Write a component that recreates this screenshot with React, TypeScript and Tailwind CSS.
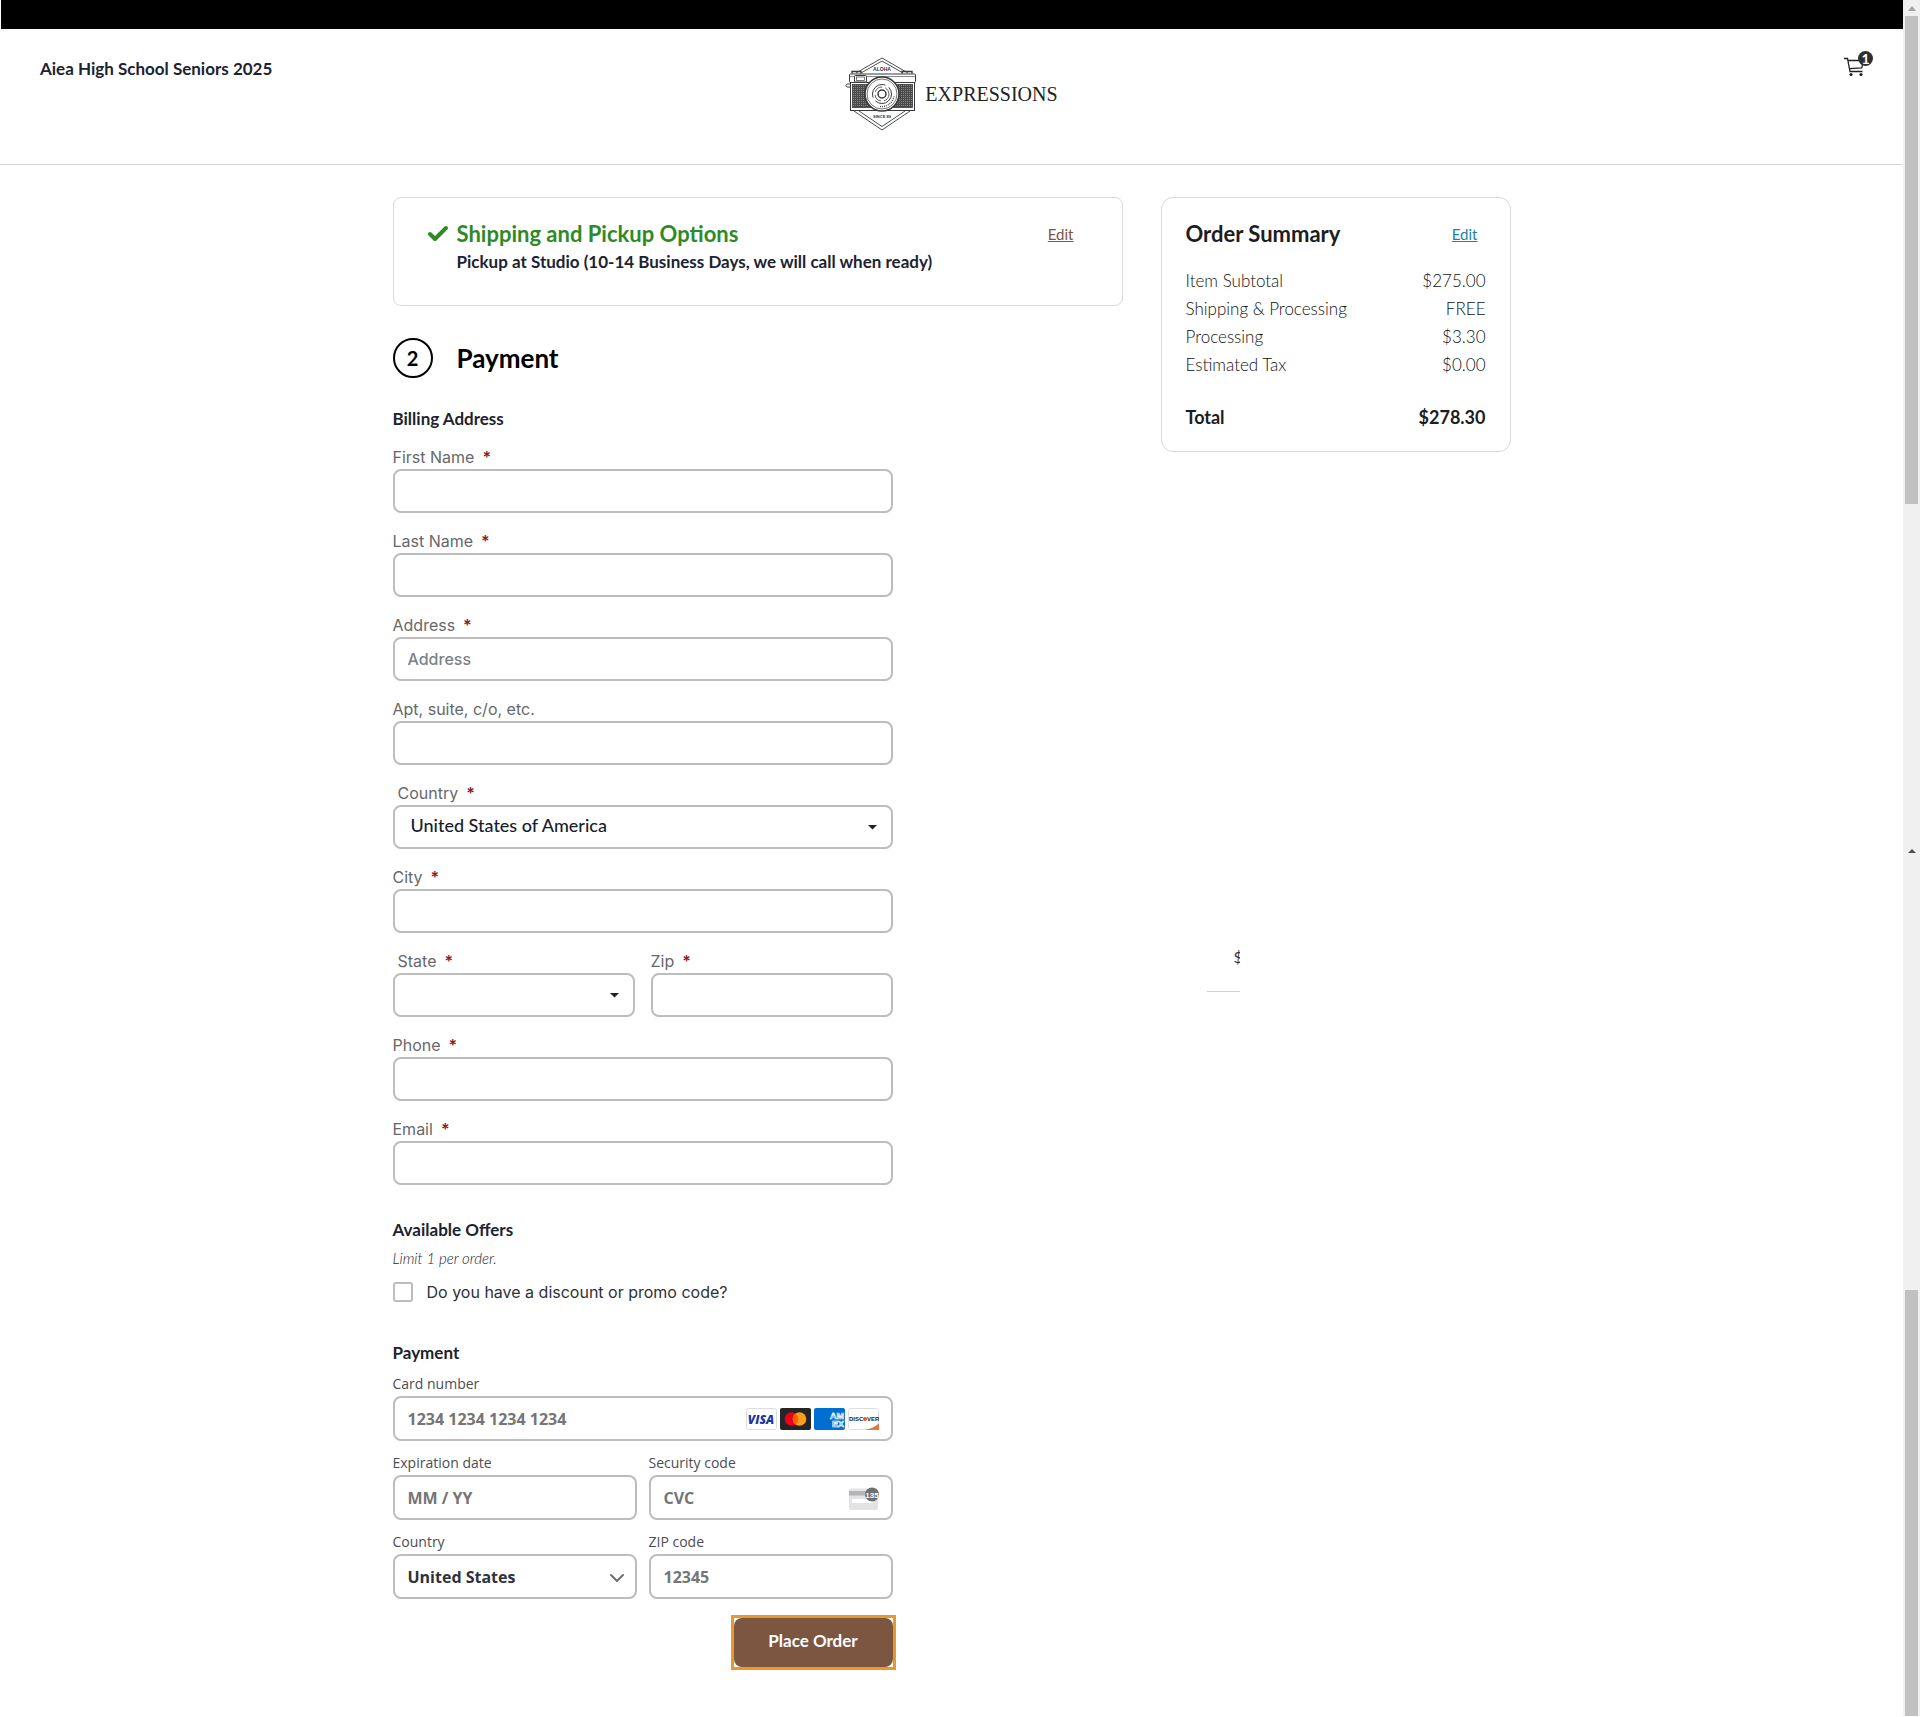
import { useState, type ReactNode } from "react"
import { Check, ChevronDown } from "lucide-react"

const summary = [
  { label: "Item Subtotal", value: "$275.00" },
  { label: "Shipping & Processing", value: "FREE" },
  { label: "Processing", value: "$3.30" },
  { label: "Estimated Tax", value: "$0.00" },
]

const inputClass =
  "block h-11 w-full rounded-lg border-2 border-[#bdbdbd] bg-white px-[13px] font-['Inter',sans-serif] text-base font-medium text-[#1c2330] placeholder:text-[#7d8185]"
const cardInputClass =
  "block h-[45px] w-full appearance-none rounded-lg border-2 border-[#bdbdbd] bg-white px-[13px] text-base font-bold text-[#30313d] placeholder:text-[#757575]"

function Field({
  id,
  label,
  required = true,
  indent = false,
  children,
}: {
  id: string
  label: string
  required?: boolean
  indent?: boolean
  children?: ReactNode
}) {
  return (
    <div className="mb-4 flex-1">
      <label
        htmlFor={id}
        className={`block font-['Inter',sans-serif] text-base text-[#66686b] ${indent ? "pl-[5px]" : ""}`}
      >
        {label}
        {required && <span className="ml-2 font-semibold text-[#8e1b2c]">*</span>}
      </label>
      {children ?? <input id={id} type="text" className={inputClass} />}
    </div>
  )
}

function CaretSelect({ id, options }: { id: string; options: string[] }) {
  return (
    <div className="relative">
      <select
        id={id}
        className="block h-11 w-full appearance-none rounded-lg border-2 border-[#bdbdbd] bg-white px-4 pb-1 text-lg font-medium text-[#16202c]"
      >
        {options.map((o) => (
          <option key={o}>{o}</option>
        ))}
      </select>
      <svg className="pointer-events-none absolute top-5 right-4" width="9" height="5" viewBox="0 0 9 5">
        <path d="M0 0h9L4.500 4.600z" fill="#222" />
      </svg>
    </div>
  )
}

function CardField({ id, label, children }: { id: string; label: string; children: ReactNode }) {
  return (
    <div className="flex-1">
      <label htmlFor={id} className="block text-sm leading-6 text-[#4c4d52]">
        {label}
      </label>
      <div className="relative">{children}</div>
    </div>
  )
}

function CameraLogo() {
  return (
    <svg width="72" height="74" viewBox="0 0 72 74" fill="none" stroke="#3a3a3a">
      <defs>
        <pattern id="grip" width="2" height="2" patternUnits="userSpaceOnUse">
          <rect width="2" height="2" fill="#4a4a4a" stroke="none" />
          <rect width="1" height="1" fill="#868686" stroke="none" />
        </pattern>
      </defs>
      {/* badge outline */}
      <path d="M11 16 37 1l26 15M16 16 37 4l21 12M9 54l28 19 28-19M14 54l23 15.500L60 54" strokeWidth=".9" />
      {/* body */}
      <rect x="4.500" y="17" width="66" height="8.500" rx="1" fill="#fff" />
      <rect x="5.500" y="25.500" width="64" height="28" fill="#fff" />
      <path d="M7 16.500v-2h9v2M57 16.500v-2h10v2" strokeWidth="1.400" />
      <path d="M5 19.500h65" strokeWidth=".6" />
      <rect x="9.500" y="18.500" width="12" height="6.500" rx="1" fill="#fff" />
      <rect x="11.500" y="20" width="8" height="3.500" strokeWidth=".7" />
      <path d="M5 27H2.500a1.500 1.500 0 0 0 0 3H5" />
      <rect x="7.500" y="27.500" width="60" height="23" fill="url(#grip)" strokeWidth=".8" />
      {/* lens */}
      <circle cx="37" cy="37" r="17" fill="#fff" strokeWidth="1.600" />
      <circle cx="37" cy="37" r="15" strokeWidth=".7" />
      <circle cx="37" cy="37" r="9.500" strokeWidth="1" strokeDasharray="22 4" />
      <circle cx="37" cy="37" r="7" strokeWidth=".8" strokeDasharray="9 3" />
      <circle cx="37" cy="37" r="4" strokeWidth="1.500" />
      <path d="M35 49.500a12.500 12.500 0 0 0 14-10" strokeWidth="1.200" strokeDasharray="1 1" />
      <g fill="#333" stroke="none" fontFamily="Liberation Sans, sans-serif" fontWeight="bold" textAnchor="middle">
        <text x="37" y="14" fontSize="5">ALOHA</text>
        <text x="37" y="61" fontSize="4">SINCE 89</text>
      </g>
    </svg>
  )
}

function CardBrands() {
  return (
    <div className="pointer-events-none absolute top-3 right-[14px] flex gap-[3px]">
      <svg width="31" height="22" viewBox="0 0 31 22">
        <rect x=".5" y=".5" width="30" height="21" rx="2" fill="#fff" stroke="#dedede" />
        <text x="15" y="15.500" fontSize="12" fontWeight="800" fontStyle="italic" textAnchor="middle" fill="#1a35a8" fontFamily="Open Sans, sans-serif">VISA</text>
      </svg>
      <svg width="31" height="22" viewBox="0 0 31 22">
        <rect width="31" height="22" rx="2" fill="#252525" />
        <circle cx="11.500" cy="11" r="6.800" fill="#eb001b" />
        <circle cx="19.500" cy="11" r="6.800" fill="#f79e1b" />
        <path d="M15.500 5.500a6.800 6.800 0 0 1 0 11 6.800 6.800 0 0 1 0-11" fill="#ff5f00" />
      </svg>
      <svg width="31" height="22" viewBox="0 0 31 22">
        <rect width="31" height="22" rx="2" fill="#016fd0" />
        <g fill="none" stroke="#fff" strokeWidth=".7" fontSize="9" fontWeight="bold" fontFamily="Liberation Sans, sans-serif">
          <text x="16" y="10.500">AM</text>
          <text x="18" y="18.500">EX</text>
        </g>
      </svg>
      <svg width="31" height="22" viewBox="0 0 31 22">
        <rect x=".5" y=".5" width="30" height="21" rx="2" fill="#fff" stroke="#dedede" />
        <path d="M31 15.500V22H17c6-1.300 10.500-3.500 14-6.500" fill="#e07a3c" />
        <g fontSize="6" fontWeight="bold" fill="#222" fontFamily="Liberation Sans, sans-serif">
          <text x="1" y="13">DISC</text>
          <text x="19" y="13">VER</text>
        </g>
        <circle cx="17" cy="11" r="2" fill="#e4572e" />
      </svg>
    </div>
  )
}

function CvcIcon() {
  return (
    <svg className="pointer-events-none absolute top-3 right-[14px]" width="31" height="24" viewBox="0 0 31 24">
      <rect x="1" y="1.500" width="29" height="21.500" rx="2" fill="#e3e3e3" />
      <path d="M1 4h29v4.500H1z" fill="#b4b5b9" />
      <path d="M4 12h21v4H4z" fill="#fff" />
      <circle cx="24" cy="7.500" r="7" fill="#6d6e72" />
      <text x="24" y="10.500" fontSize="8" fontWeight="bold" textAnchor="middle" fill="#fff" fontFamily="Liberation Sans, sans-serif">135</text>
    </svg>
  )
}

function Header() {
  return (
    <header className="grid h-[136px] grid-cols-3 items-start border-b border-[#d4d4d4] px-10 pt-7">
      <p className="text-[17px] leading-6 font-bold">Aiea High School Seniors 2025</p>
      <a href="#home" className="flex items-center gap-2 justify-self-center">
        <CameraLogo />
        <span className="font-['Liberation_Serif',serif] text-xl text-[#222]">EXPRESSIONS</span>
      </a>
      <a href="#cart" aria-label="Cart" className="relative mr-[-10px] justify-self-end pr-[9px]">
        <svg width="20" height="20" viewBox="0 0 20 20" fill="none" stroke="#222" strokeWidth="1.300">
          <path d="M0 1.500h3.500L6 14.500h12.500M4.200 3.500h15L17.800 11 5.400 11.600" />
          <circle cx="7" cy="17.500" r="1.600" fill="#222" stroke="none" />
          <circle cx="17" cy="17.500" r="1.600" fill="#222" stroke="none" />
        </svg>
        <span className="absolute -top-[6px] right-0 flex size-[15px] items-center justify-center rounded-full bg-[#2f2f2f] text-sm leading-none font-bold text-white">
          1
        </span>
      </a>
    </header>
  )
}

function BillingAddress() {
  return (
    <section className="mt-[29px]">
      <h3 className="mb-[14px] text-[17px] leading-6 font-bold">Billing Address</h3>
      <Field id="firstName" label="First Name" />
      <Field id="lastName" label="Last Name" />
      <Field id="address" label="Address">
        <input id="address" type="text" placeholder="Address" className={inputClass} />
      </Field>
      <Field id="apt" label="Apt, suite, c/o, etc." required={false} />
      <Field id="country" label="Country" indent>
        <CaretSelect id="country" options={["United States of America"]} />
      </Field>
      <Field id="city" label="City" />
      <div className="flex gap-4">
        <Field id="state" label="State" indent>
          <CaretSelect id="state" options={[""]} />
        </Field>
        <Field id="zip" label="Zip" />
      </div>
      <Field id="phone" label="Phone" />
      <Field id="email" label="Email" />
    </section>
  )
}

function Offers() {
  const [promo, setPromo] = useState(false)

  return (
    <section className="mt-[33px]">
      <h3 className="text-[17px] leading-6 font-bold">Available Offers</h3>
      <p className="mt-1 text-[15px] leading-6 font-light italic">Limit 1 per order.</p>
      <label className="mt-3 flex items-center gap-[14px] font-['Inter',sans-serif] text-base leading-5 text-[#2d3136]">
        <input
          type="checkbox"
          checked={promo}
          onChange={(e) => setPromo(e.target.checked)}
          className="size-5 appearance-none rounded-[3px] border-2 border-[#bdbdbd] bg-white checked:bg-[#7d5642]"
        />
        Do you have a discount or promo code?
      </label>
    </section>
  )
}

function CardPayment() {
  return (
    <section className="mt-[39px]">
      <h3 className="mb-[7px] text-[17px] leading-6 font-bold">Payment</h3>
      <div className="space-y-[10px] font-['Open_Sans',sans-serif]">
        <CardField id="cardNumber" label="Card number">
          <input id="cardNumber" type="text" placeholder="1234 1234 1234 1234" className={cardInputClass} />
          <CardBrands />
        </CardField>
        <div className="flex gap-3">
          <CardField id="exp" label="Expiration date">
            <input id="exp" type="text" placeholder="MM / YY" className={cardInputClass} />
          </CardField>
          <CardField id="cvc" label="Security code">
            <input id="cvc" type="text" placeholder="CVC" className={cardInputClass} />
            <CvcIcon />
          </CardField>
        </div>
        <div className="flex gap-3">
          <CardField id="cardCountry" label="Country">
            <select id="cardCountry" className={cardInputClass}>
              <option>United States</option>
            </select>
            <ChevronDown className="pointer-events-none absolute top-3 right-2 size-6 text-[#6d6e72]" strokeWidth={2} />
          </CardField>
          <CardField id="cardZip" label="ZIP code">
            <input id="cardZip" type="text" placeholder="12345" className={cardInputClass} />
          </CardField>
        </div>
      </div>
    </section>
  )
}

function OrderSummary() {
  return (
    <section className="rounded-xl border border-[#d9d9d9] px-6 pt-6 pb-5">
      <div className="flex items-center justify-between">
        <h2 className="text-[22px] leading-6 font-bold text-[#1d1d22]">Order Summary</h2>
        <a href="#cart" className="mr-2 text-[15px] leading-6 text-[#1783a8] underline">
          Edit
        </a>
      </div>
      <dl className="mt-[21px]">
        {summary.map((row) => (
          <div key={row.label} className="flex justify-between text-[17px] leading-7 font-light text-[#111]">
            <dt>{row.label}</dt>
            <dd>{row.value}</dd>
          </div>
        ))}
        <div className="mt-6 flex justify-between text-lg leading-7 font-bold text-[#1d1d22]">
          <dt>Total</dt>
          <dd>$278.30</dd>
        </div>
      </dl>
    </section>
  )
}

function Scrollbar() {
  return (
    <div className="flex w-[17px] shrink-0 flex-col items-center bg-[#f0f0f0]">
      <div className="flex h-4 items-center justify-center">
        <svg width="8" height="5" viewBox="0 0 8 5">
          <path d="M0 5 4 0l4 5z" fill="#a3a3a3" />
        </svg>
      </div>
      <div className="h-[488px] w-[13px] bg-[#c1c1c1]" />
      <svg className="mt-[345px]" width="8" height="4" viewBox="0 0 8 4">
        <path d="M0 4 4 0l4 4z" fill="#4d4d4d" />
      </svg>
      <div className="mt-[437px] w-[13px] flex-1 bg-[#c1c1c1]" />
    </div>
  )
}

export default function App() {
  return (
    <div className="flex bg-white font-['Lato',sans-serif] text-[#1c2330]">
      <div className="min-w-0 flex-1">
        <div className="ml-px h-[29px] bg-black" />
        <Header />
        <main className="mx-auto flex max-w-[1118px] items-start gap-[38px] pt-8 pb-[46px]">
          <div className="min-w-0 flex-1">
            <section className="flex items-start rounded-lg border border-[#d9d9d9] pt-6 pr-12 pb-[31px] pl-8">
              <Check className="mr-[7px] size-6 text-[#2f8a26]" strokeWidth={4} />
              <div className="flex-1">
                <h2 className="text-[22px] leading-6 font-bold text-[#2f8a26]">Shipping and Pickup Options</h2>
                <p className="mt-1 text-[17px] leading-6 font-bold">
                  Pickup at Studio (10-14 Business Days, we will call when ready)
                </p>
              </div>
              <a href="#shipping" className="text-[15px] leading-6 text-[#7d5642] underline">
                Edit
              </a>
            </section>

            <div className="mt-8 flex items-center gap-6 text-black">
              <span className="flex size-10 items-center justify-center rounded-full border-2 border-black text-xl font-bold">
                2
              </span>
              <h2 className="text-[26px] leading-8 font-bold">Payment</h2>
            </div>

            <form className="max-w-[500px]" onSubmit={(e) => e.preventDefault()}>
              <BillingAddress />
              <Offers />
              <CardPayment />
              <div className="mt-4 -mr-[3px] flex justify-end">
                <div className="border-3 border-[#e8992b]">
                  <button
                    type="submit"
                    className="block h-[49px] min-w-[159px] rounded-lg bg-[#7d5642] px-8 pb-1 text-[17px] leading-6 font-bold text-white"
                  >
                    Place Order
                  </button>
                </div>
              </div>
            </form>
          </div>

          <aside className="w-[350px]">
            <OrderSummary />
            <div className="mt-[493px] ml-[46px] flex h-[47px] w-[33px] justify-end border-b border-[#d0d0d0]">
              <span className="w-[6px] overflow-hidden text-base leading-6 text-[#333]">$</span>
            </div>
          </aside>
        </main>
      </div>
      <Scrollbar />
    </div>
  )
}
